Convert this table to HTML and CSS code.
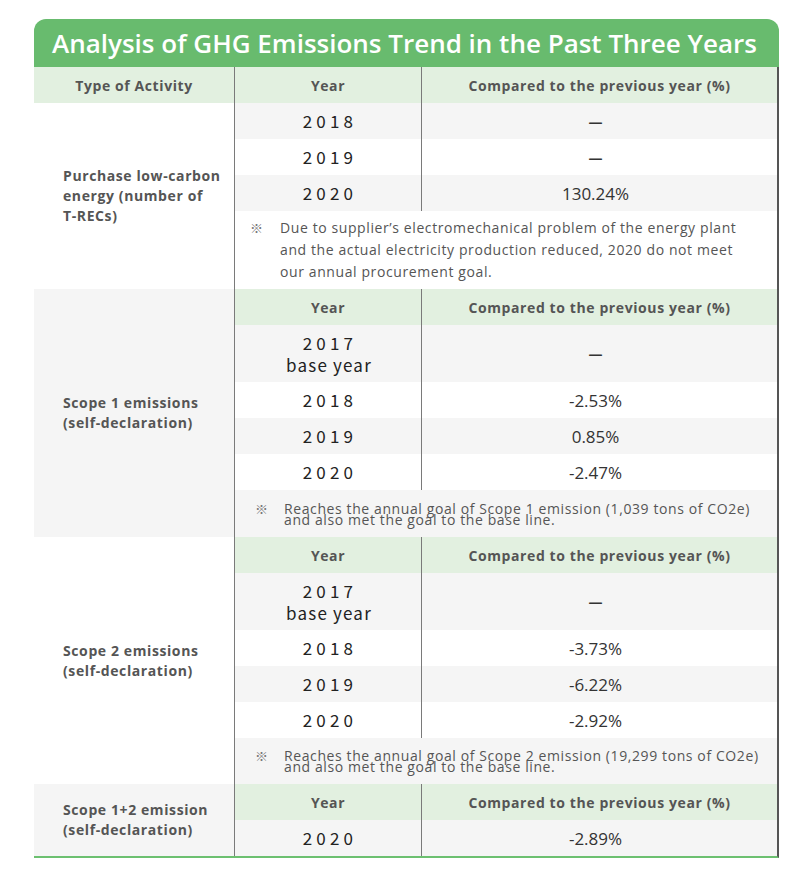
FILE: index.html
```html
<!DOCTYPE html>
<html lang="en">
<head>
<meta charset="utf-8">
<title>Analysis of GHG Emissions Trend</title>
<link rel="stylesheet" href="styles.css">
</head>
<body>
<div class="panel">
  <h1 class="title">Analysis of GHG Emissions Trend in the Past Three Years</h1>
  <div class="table">
    <div class="head-row">
      <div class="th c1">Type of Activity</div>
      <div class="th c2">Year</div>
      <div class="th c3">Compared to the previous year (%)</div>
    </div>

    <section class="group">
      <div class="label white">Purchase low-carbon<br>energy (number of<br>T-RECs)</div>
      <div class="rows">
        <div class="row gray"><div class="year">2018</div><div class="val dash">—</div></div>
        <div class="row white"><div class="year">2019</div><div class="val dash">—</div></div>
        <div class="row gray"><div class="year">2020</div><div class="val">130.24%</div></div>
        <div class="note white note-wide"><div class="note-in"><span class="mark">※</span><p>Due to supplier’s electromechanical problem of the energy plant<br>and the actual electricity production reduced, 2020 do not meet<br>our annual procurement goal.</p></div></div>
      </div>
    </section>

    <section class="group">
      <div class="label gray">Scope 1 emissions<br>(self-declaration)</div>
      <div class="rows">
        <div class="row sub-head"><div class="th year-th">Year</div><div class="th">Compared to the previous year (%)</div></div>
        <div class="row gray tall"><div class="year">2017<br><span class="base">base year</span></div><div class="val dash">—</div></div>
        <div class="row white"><div class="year">2018</div><div class="val">-2.53%</div></div>
        <div class="row gray"><div class="year">2019</div><div class="val">0.85%</div></div>
        <div class="row white"><div class="year">2020</div><div class="val">-2.47%</div></div>
        <div class="note gray note-tight n47"><div class="note-in"><span class="mark">※</span><p>Reaches the annual goal of Scope 1 emission (1,039 tons of CO2e)<br>and also met the goal to the base line.</p></div></div>
      </div>
    </section>

    <section class="group">
      <div class="label white">Scope 2 emissions<br>(self-declaration)</div>
      <div class="rows">
        <div class="row sub-head"><div class="th year-th">Year</div><div class="th">Compared to the previous year (%)</div></div>
        <div class="row gray tall"><div class="year">2017<br><span class="base">base year</span></div><div class="val dash">—</div></div>
        <div class="row white"><div class="year">2018</div><div class="val">-3.73%</div></div>
        <div class="row gray"><div class="year">2019</div><div class="val">-6.22%</div></div>
        <div class="row white"><div class="year">2020</div><div class="val">-2.92%</div></div>
        <div class="note gray note-tight n46"><div class="note-in"><span class="mark">※</span><p>Reaches the annual goal of Scope 2 emission (19,299 tons of CO2e)<br>and also met the goal to the base line.</p></div></div>
      </div>
    </section>

    <section class="group last">
      <div class="label gray">Scope 1+2 emission<br>(self-declaration)</div>
      <div class="rows">
        <div class="row sub-head"><div class="th year-th">Year</div><div class="th">Compared to the previous year (%)</div></div>
        <div class="row gray"><div class="year">2020</div><div class="val">-2.89%</div></div>
      </div>
    </section>
  </div>
</div>
</body>
</html>
```

FILE: styles.css
```css
* { box-sizing: border-box; }

html, body {
  margin: 0;
  padding: 0;
  background: #ffffff;
}

body {
  font-family: "Open Sans", "Lato", sans-serif;
  color: #555555;
}

.panel {
  margin: 19px 0 0 34px;
  width: 745px;
}

.title {
  margin: 0;
  height: 48px;
  background: #68bb6e;
  border-radius: 12px 12px 0 0;
  color: #ffffff;
  font-family: "Open Sans", sans-serif;
  font-weight: 600;
  font-size: 26px;
  line-height: 48px;
  padding-left: 18px;
  white-space: nowrap;
}

.table {
  border-right: 2px solid #555555;
  border-bottom: 2px solid #6cc070;
}

.head-row {
  display: grid;
  grid-template-columns: 201px 187px 1fr;
  height: 36px;
  background: #e2f0e0;
}

.th {
  display: flex;
  align-items: center;
  justify-content: center;
  font-weight: 700;
  font-size: 14px;
  letter-spacing: 0.6px;
  color: #555555;
}

.c1, .c2 { border-right: 1px solid #7a7a7a; }

.group {
  display: grid;
  grid-template-columns: 201px 1fr;
}

.label {
  border-right: 1px solid #7a7a7a;
  display: flex;
  align-items: center;
  padding-left: 29px;
  font-weight: 700;
  font-size: 14px;
  letter-spacing: 0.6px;
  line-height: 20px;
  color: #555555;
}

.rows {
  display: flex;
  flex-direction: column;
}

.row {
  display: grid;
  grid-template-columns: 187px 1fr;
  height: 36px;
}

.row.tall { height: 57px; }

.white { background: #ffffff; }
.gray { background: #f5f5f5; }

.sub-head { background: #e2f0e0; }

.year-th { border-right: 1px solid #7a7a7a; }

.year {
  border-right: 1px solid #7a7a7a;
  display: flex;
  flex-direction: column;
  align-items: center;
  justify-content: center;
  font-family: "Noto Sans CJK JP", sans-serif;
  font-size: 17px;
  line-height: 22px;
  letter-spacing: 4.2px;
  padding-left: 4px;
  color: #222222;
  text-align: center;
}

.year .base {
  letter-spacing: 1.2px;
  padding-right: 2px;
}

.val {
  display: flex;
  align-items: center;
  justify-content: center;
  font-family: "Open Sans", sans-serif;
  font-size: 17px;
  color: #333333;
  padding-right: 8px;
}

.val.dash {
  font-size: 14px;
  font-weight: 700;
  color: #333333;
}

.note {
  display: flex;
  align-items: center;
  font-family: "Open Sans", sans-serif;
  font-size: 14px;
  letter-spacing: 0.6px;
  color: #555555;
}

.note-in {
  display: flex;
  align-items: baseline;
}

.note p { margin: 0; }

.note .mark {
  color: #777777;
  font-size: 13px;
  letter-spacing: 0;
  font-family: "Noto Sans CJK JP", sans-serif;
}

.note-wide {
  height: 78px;
  padding-left: 15px;
  line-height: 22px;
}

.note-wide .mark { width: 30px; }

.note-tight {
  padding-left: 20px;
  line-height: 11px;
}

.note-tight .mark { width: 29px; }

.n47 { height: 47px; }
.n46 { height: 46px; }
```
